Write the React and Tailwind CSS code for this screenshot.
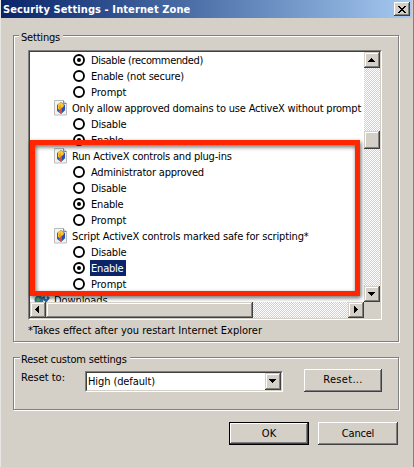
const raised =
  'bg-[#d4d0c8] shadow-[inset_-1px_-1px_0_#404040,inset_1px_1px_0_#d4d0c8,inset_-2px_-2px_0_#808080,inset_2px_2px_0_#fff]';
const button =
  'flex items-center justify-center bg-[#d4d0c8] shadow-[inset_-1px_-1px_0_#404040,inset_1px_1px_0_#fff,inset_-2px_-2px_0_#808080]';
const track =
  'bg-[#fff] bg-[conic-gradient(#d4d0c8_25%,#fff_0_50%,#d4d0c8_0_75%,#fff_0)] bg-[length:2px_2px]';
const group =
  'ml-[13px] w-[386px] border border-[#808080] shadow-[1px_1px_0_#fff,inset_1px_1px_0_#fff]';

function Arrow({ points }) {
  return (
    <svg width="16" height="16" viewBox="0 0 16 16" shapeRendering="crispEdges">
      <polygon points={points} fill="#000" />
    </svg>
  );
}

function Shield() {
  return (
    <svg width="14" height="16" viewBox="0 0 14 16" className="shrink-0">
      <path d="M.5 .5h9l3 3v11.500h-12z" fill="#f3f3f3" stroke="#bcbcbc" />
      <path d="M9.500 .5v3h3" fill="#ddd" stroke="#8a8a8a" />
      <path d="M3 5l4-3 4 3v5l-4 4-4-3z" fill="#2f5fc4" />
      <path d="M4 4.500L7 2l3 3-1 3-2 2-3-1z" fill="#f9c92f" />
      <path d="M5 8.500l2-1.500 1 1.500v4.500L7 14l-2-2z" fill="#e34c2d" />
      <path d="M8 8l3-2.500V10l-3 3z" fill="#284fae" />
      <path d="M5 6l2-1v4l-2 1z" fill="#f09a2c" />
    </svg>
  );
}

function Heading({ text, className }) {
  return (
    <div className="flex h-4 items-center pl-6">
      <Shield />
      <span className={'ml-[4px] pt-px leading-4 ' + className}>{text}</span>
    </div>
  );
}

function Option({ text, on, selected, className = '' }) {
  return (
    <div className="flex h-4 items-center pl-[43px]">
      <svg width="12" height="12" viewBox="0 0 12 12" className="shrink-0">
        <circle cx="6" cy="6" r="5" fill="#fff" stroke="#000" strokeWidth="1.900" />
        {on && <circle cx="6" cy="6" r="2" />}
      </svg>
      <span
        className={
          'ml-[5px] h-4 pl-px leading-[18px] ' +
          (selected ? 'w-9 bg-[#0a246a] text-white ' : '') +
          className
        }
      >
        {text}
      </span>
    </div>
  );
}

export default function App() {
  return (
    <div className="h-[467px] w-[414px] overflow-hidden border-r border-l border-r-[#808080] border-l-[#e8e6e2] bg-[#d4d0c8] font-['DejaVu_Sans_Condensed','DejaVu_Sans',sans-serif] text-[11px] whitespace-nowrap text-black">
      <div className="-ml-px">
        <div className="ml-px flex h-[18px] w-[411px] items-center justify-between bg-gradient-to-r from-[#0a246a] to-[#a6caf0] pr-[2px] pl-[2px]">
          <span className="pt-[2px] leading-4 font-bold tracking-[0.1px] text-white">Security Settings - Internet Zone</span>
          <div className={'h-[14px] w-4 ' + button}>
            <svg width="8" height="7" viewBox="0 0 8 7" shapeRendering="crispEdges">
              <path d="M0 0h2v1h1v1h2V1h1V0h2v1H7v1H6v1H5v1h1v1h1v1h1v1H6V6H5V5H3v1H2v1H0V6h1V5h1V4h1V3H2V2H1V1H0z" />
            </svg>
          </div>
        </div>

        <div className={group + ' mt-[17px] h-[307px]'}>
          <div className="-mt-[6px] ml-[5px] w-[44px] bg-[#d4d0c8] pl-[2px] leading-4 tracking-[-0.2px]">Settings</div>
          <div className="mt-[4px] ml-[14px] h-[270px] w-[354px] border border-t-[#808080] border-r-white border-b-white border-l-[#808080]">
            <div className="h-[268px] w-[352px] border border-t-[#404040] border-r-[#d4d0c8] border-b-[#d4d0c8] border-l-[#404040]">
              <div className="relative">
                <div className="flex h-[250px]">
                  <div className="w-[334px] overflow-hidden bg-white">
                    <Option text="Disable (recommended)" on className="tracking-[-0.35px]" />
                    <Option text="Enable (not secure)" className="tracking-[-0.2px]" />
                    <Option text="Prompt" className="tracking-[0px]" />
                    <Heading text="Only allow approved domains to use ActiveX without prompt" className="tracking-[-0.2px]" />
                    <Option text="Disable" className="tracking-[-0.2px]" />
                    <Option text="Enable" on className="tracking-[-0.2px]" />
                    <Heading text="Run ActiveX controls and plug-ins" className="tracking-[-0.2px]" />
                    <Option text="Administrator approved" className="tracking-[-0.2px]" />
                    <Option text="Disable" className="tracking-[-0.2px]" />
                    <Option text="Enable" on className="tracking-[-0.2px]" />
                    <Option text="Prompt" className="tracking-[0px]" />
                    <Heading text="Script ActiveX controls marked safe for scripting*" className="tracking-[-0.15px]" />
                    <Option text="Disable" className="tracking-[-0.2px]" />
                    <Option text="Enable" on selected className="tracking-[-0.2px]" />
                    <Option text="Prompt" className="tracking-[0px]" />
                    <div className="flex h-4 items-center pl-1">
                      <svg width="16" height="16" viewBox="0 0 16 16">
                        <circle cx="5" cy="8" r="4.500" fill="#2b78a8" />
                        <path d="M2 6l3-1 1 3-2 2z" fill="#58ae58" />
                        <path d="M8 5l2-1 2 1 2-1 2 2-4 5-4-5z" fill="#2d6d9c" />
                        <path d="M11 5h2v2h-2z" fill="#9bd0eb" />
                      </svg>
                      <span className="ml-1 pt-px leading-4 tracking-[-0.1px]">Downloads</span>
                    </div>
                  </div>
                  <div className={'flex w-4 flex-col ' + track}>
                    <div className={'h-4 ' + raised}><Arrow points="4,10 11,10 7.500,6" /></div>
                    <div className={'mt-[63px] h-[18px] ' + raised} />
                    <div className={'mt-auto h-4 ' + raised}><Arrow points="4,6 11,6 7.500,10" /></div>
                  </div>
                </div>
                <div className="flex h-4 bg-[#d4d0c8]">
                  <div className={'flex w-[334px] ' + track}>
                    <div className={'w-4 ' + raised}><Arrow points="9,4 9,11 5,7.500" /></div>
                    <div className={'w-[207px] ' + raised} />
                    <div className={'ml-auto w-4 ' + raised}><Arrow points="6,4 6,11 10,7.500" /></div>
                  </div>
                </div>
                <div className="absolute top-[88px] left-0 h-[156px] w-[330px] border-[5px] border-[#ff2600] drop-shadow-[1px_2px_2px_rgba(0,0,0,0.6)]" />
              </div>
            </div>
          </div>
          <div className="mt-[3px] ml-[14px] leading-4">*Takes effect after you restart Internet Explorer</div>
        </div>

        <div className={group + ' mt-[15px] h-[53px]'}>
          <div className="-mt-[6px] ml-[6px] w-[110px] bg-[#d4d0c8] pl-px leading-4 tracking-[-0.2px]">Reset custom settings</div>
          <div className="ml-[7px] flex items-start pt-px">
            <span className="mt-px w-[64px] leading-4">Reset to:</span>
            <div className="mt-[2px] flex h-[21px] w-[198px] border border-t-[#808080] border-r-white border-b-white border-l-[#808080] bg-white">
              <div className="flex flex-1 border border-t-[#404040] border-r-[#d4d0c8] border-b-[#d4d0c8] border-l-[#404040]">
                <span className="ml-px flex-1 leading-[18px] tracking-[-0.1px]">High (default)</span>
                <div className={'h-[17px] w-4 ' + raised}><Arrow points="4,6 11,6 7.500,10" /></div>
              </div>
            </div>
            <div className={'ml-[21px] h-[23px] w-[78px] ' + button}><span className="tracking-[0.3px]">Reset...</span></div>
          </div>
        </div>

        <div className="mt-[12px] ml-[229px] flex gap-[9px]">
          <div className="h-[23px] w-20 border border-black bg-[#d4d0c8]">
            <div className={'h-full ' + button}><span className="pt-px">OK</span></div>
          </div>
          <div className={'h-[23px] w-20 ' + button}><span className="pt-px tracking-[-0.2px]">Cancel</span></div>
        </div>
      </div>
    </div>
  );
}
